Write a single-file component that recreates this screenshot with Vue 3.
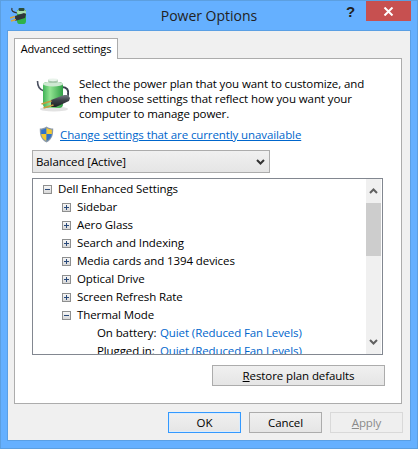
<script setup>
const rows = [
  { label: "Sidebar", box: "plus" },
  { label: "Aero Glass", box: "plus" },
  { label: "Search and Indexing", box: "plus" },
  { label: "Media cards and 1394 devices", box: "plus" },
  { label: "Optical Drive", box: "plus" },
  { label: "Screen Refresh Rate", box: "plus" },
  { label: "Thermal Mode", box: "minus" },
];
const settings = [
  { label: "On battery:", value: "Quiet (Reduced Fan Levels)" },
  { label: "Plugged in:", value: "Quiet (Reduced Fan Levels)" },
];
</script>

<template>
  <div class="window">
    <div class="titlebar">
      <div class="title-left">
        <svg class="app-icon" width="18" height="18" viewBox="0 0 18 18">
          <path d="M7 3h9v11c0 2-1 3-2 3H9c-1 0-2-1-2-3z" fill="#2fb24a" />
          <rect x="7" y="3" width="9" height="4" rx="1.500" fill="#a8dcb0" />
          <rect x="8.500" y="1" width="6" height="3" rx="1" fill="#2c4d3a" />
          <path d="M2 1c-1 3 1 4 5 5" fill="none" stroke="#333" stroke-width="1.200" />
          <path d="M5 9l9-3 2 1-1 4-10 3z" fill="#30353a" />
          <path d="M0 11l5-1.500M1 14l5-1.500" stroke="#d9a53a" stroke-width="1.500" />
        </svg>
      </div>
      <div class="title">Power Options</div>
      <div class="controls">
        <span class="help">?</span>
        <span class="close">
          <svg width="11" height="9" viewBox="0 0 11 9">
            <path d="M1.500 .5l8 8M9.500 .5l-8 8" stroke="#fff" stroke-width="2" fill="none" />
          </svg>
        </span>
      </div>
    </div>

    <div class="client">
      <div class="tabs">
        <div class="tab">Advanced settings</div>
      </div>
      <div class="panel">
        <div class="intro">
          <svg class="battery" width="34" height="36" viewBox="0 0 34 36">
            <defs>
              <linearGradient id="cell" x1="0" x2="1" y1="0" y2="0">
                <stop offset="0" stop-color="#3fb356" />
                <stop offset="0.35" stop-color="#92e392" />
                <stop offset="1" stop-color="#2f9f45" />
              </linearGradient>
              <linearGradient id="plug" x1="0" x2="0" y1="0" y2="1">
                <stop offset="0" stop-color="#777d85" />
                <stop offset="0.45" stop-color="#3b4046" />
                <stop offset="1" stop-color="#1d2024" />
              </linearGradient>
            </defs>
            <ellipse cx="18" cy="31" rx="14" ry="2.500" fill="#e2e2e2" />
            <path d="M1.500 3c0 6 2.500 9 6.500 10" fill="none" stroke="#4a5060" stroke-width="1.600" />
            <path d="M26 9c5 0 7 3 6 8-.5 2-1.500 3.500-3 4" fill="none" stroke="#3c4250" stroke-width="2" />
            <rect x="7" y="4" width="20" height="26" rx="4" fill="url(#cell)" />
            <ellipse cx="17" cy="6" rx="10" ry="2.500" fill="#cfe8d2" />
            <rect x="12" y="1" width="10" height="4" rx="2" fill="#a9c9ae" />
            <ellipse cx="17" cy="1.800" rx="5" ry="1.400" fill="#e8f3ea" />
            <path d="M15 22l13-5h4l2 3-1 3-13 6h-5z" fill="url(#plug)" />
            <path d="M5.500 26l10-3M7.500 30l10-3" stroke="#c99a3f" stroke-width="1.800" fill="none" />
          </svg>
          <p class="intro-text">
            Select the power plan that you want to customize, and<br />
            then choose settings that reflect how you want your<br />
            computer to manage power.
          </p>
        </div>
        <div class="change">
          <svg class="shield" width="15" height="17" viewBox="0 0 15 17">
            <path d="M7.500 .5C5.500 2 3 2.500 .8 2.500c0 6 .4 10.500 6.700 14 6.300-3.500 6.700-8 6.700-14C12 2.500 9.500 2 7.500 .5z" fill="#8a98a8" />
            <path d="M7.500 2C5.800 3 4 3.500 2.200 3.700v4.300h5.300z" fill="#2f72c8" />
            <path d="M7.500 2v6h5.300V3.700C11 3.500 9.200 3 7.500 2z" fill="#f3c92e" />
            <path d="M2.300 8h5.200v7C4 13 2.600 11 2.300 8z" fill="#f3c92e" />
            <path d="M7.500 8h5.200c-.3 3-1.700 5-5.200 7z" fill="#2f72c8" />
          </svg>
          <a class="link" href="#">Change settings that are currently unavailable</a>
        </div>
        <div class="dropdown">
          <span>Balanced [Active]</span>
          <svg width="9" height="6" viewBox="0 0 9 6">
            <path d="M1 1l3.500 3.500L8 1" fill="none" stroke="#333" stroke-width="2" />
          </svg>
        </div>
        <div class="list">
          <div class="tree">
            <div class="row">
              <span class="box"><i class="h"></i></span>
              <span>Dell Enhanced Settings</span>
            </div>
            <div v-for="r in rows" :key="r.label" class="row level1">
              <span class="box">
                <i class="h"></i>
                <i v-if="r.box === 'plus'" class="v"></i>
              </span>
              <span>{{ r.label }}</span>
            </div>
            <div v-for="s in settings" :key="s.label" class="row level2">
              <span class="name">{{ s.label }}</span>
              <span class="value">{{ s.value }}</span>
            </div>
          </div>
          <div class="scrollbar">
            <div class="arrow">
              <svg width="9" height="6" viewBox="0 0 9 6">
                <path d="M1 5l3.500-3.500L8 5" fill="none" stroke="#606060" stroke-width="2" />
              </svg>
            </div>
            <div class="thumb"></div>
            <div class="track"></div>
            <div class="arrow">
              <svg width="9" height="6" viewBox="0 0 9 6">
                <path d="M1 1l3.500 3.500L8 1" fill="none" stroke="#606060" stroke-width="2" />
              </svg>
            </div>
          </div>
        </div>
        <div class="restore-row">
          <button class="btn restore"><u>R</u>estore plan defaults</button>
        </div>
      </div>
      <div class="footer">
        <button class="btn ok">OK</button>
        <button class="btn">Cancel</button>
        <button class="btn disabled"><u>A</u>pply</button>
      </div>
    </div>
  </div>
</template>

<style scoped>
.window {
  width: 418px;
  height: 449px;
  box-sizing: border-box;
  background: #65b0ff;
  border: 1px solid #5c9fe0;
  padding: 0 6px 7px;
  display: flex;
  flex-direction: column;
  font-family: "Open Sans", "Noto Sans", sans-serif;
  font-size: 11.5px;
  letter-spacing: -0.1px;
  color: #000;
  overflow: hidden;
}
.titlebar {
  height: 29px;
  flex: none;
  display: grid;
  grid-template-columns: 1fr auto 1fr;
  margin: 0 -6px;
}
.title-left {
  padding: 6px 0 0 9px;
}
.app-icon {
  display: block;
}
.title {
  font-size: 14px;
  letter-spacing: 0;
  line-height: 29px;
  color: #222;
}
.controls {
  display: flex;
  justify-content: flex-end;
  align-items: flex-start;
  padding-right: 6px;
}
.help {
  font-family: "Liberation Sans", sans-serif;
  font-size: 15px;
  font-weight: 700;
  line-height: 22px;
  margin-right: 11px;
  color: #222;
}
.close {
  width: 45px;
  height: 20px;
  background: #c75050;
  display: flex;
  align-items: center;
  justify-content: center;
}
.client {
  flex: 1;
  background: #f0f0f0;
  border: 1px solid #5a9fe4;
  padding: 7px 8px 0 6px;
  display: flex;
  flex-direction: column;
}
.tabs {
  display: flex;
  height: 20px;
  flex: none;
}
.tab {
  width: 104px;
  height: 21px;
  box-sizing: border-box;
  border: 1px solid #acacac;
  border-bottom: 0;
  background: #fff;
  font-size: 11px;
  line-height: 20px;
  letter-spacing: -0.15px;
  text-align: center;
  position: relative;
  z-index: 1;
}
.panel {
  flex: 1;
  background: #fff;
  border: 1px solid #acacac;
  padding: 17px 18px 0 17px;
  display: flex;
  flex-direction: column;
}
.intro {
  display: flex;
  gap: 9px;
  padding-left: 4px;
  height: 45px;
}
.battery {
  margin-top: 2px;
  flex: none;
}
.intro-text {
  margin: 0;
  line-height: 15px;
  white-space: nowrap;
}
.change {
  display: flex;
  align-items: center;
  gap: 6px;
  margin-top: 5px;
  padding-left: 7px;
  height: 17px;
}
.shield {
  flex: none;
}
.link {
  color: #0066cc;
  text-decoration: underline;
  white-space: nowrap;
}
.dropdown {
  margin-top: 7px;
  width: 238px;
  height: 23px;
  box-sizing: border-box;
  border: 1px solid #acacac;
  background: linear-gradient(#f0f0f0, #e5e5e5);
  display: flex;
  align-items: center;
  justify-content: space-between;
  padding: 0 4px 0 3px;
  flex: none;
}
.list {
  margin-top: 5px;
  height: 177px;
  box-sizing: border-box;
  border: 1px solid #828790;
  background: #fff;
  display: flex;
  overflow: hidden;
  flex: none;
  padding-right: 1px;
}
.tree {
  flex: 1;
  overflow: hidden;
  padding: 1px 0 0 10px;
}
.row {
  height: 18px;
  line-height: 18px;
  display: flex;
  align-items: center;
  white-space: nowrap;
}
.level1 {
  padding-left: 19px;
}
.level2 {
  padding-left: 54px;
}
.name {
  width: 63px;
  flex: none;
}
.box {
  width: 9px;
  height: 9px;
  box-sizing: border-box;
  border: 1px solid #8e8f8f;
  background: linear-gradient(#f6f6f6, #d8d8d8);
  margin-right: 6px;
  position: relative;
  flex: none;
}
.box .h {
  position: absolute;
  left: 1px;
  top: 3px;
  width: 5px;
  height: 1px;
  background: #2a4a7a;
}
.box .v {
  position: absolute;
  left: 3px;
  top: 1px;
  width: 1px;
  height: 5px;
  background: #2a4a7a;
}
.value {
  color: #0066cc;
}
.scrollbar {
  width: 15px;
  flex: none;
  background: #f0f0f0;
  display: flex;
  flex-direction: column;
}
.arrow {
  height: 24px;
  flex: none;
  display: flex;
  align-items: center;
  justify-content: center;
}
.thumb {
  height: 53px;
  flex: none;
  background: #cdcdcd;
}
.track {
  flex: 1;
}
.restore-row {
  margin-top: 10px;
  display: flex;
  justify-content: flex-end;
  margin-right: -2px;
}
.btn {
  width: 73px;
  height: 21px;
  box-sizing: border-box;
  border: 1px solid #acacac;
  background: linear-gradient(#f0f0f0, #e5e5e5);
  font: inherit;
  letter-spacing: inherit;
  color: #000;
  padding: 0;
}
.btn.restore {
  width: 173px;
}
.btn.ok {
  border: 1px solid #3399ff;
  box-shadow: inset 0 0 0 1px #dcecfb;
}
.btn.disabled {
  color: #8a8a8a;
  border-color: #d9d9d9;
  background: #efefef;
}
.footer {
  height: 36px;
  flex: none;
  display: flex;
  justify-content: flex-end;
  align-items: flex-start;
  gap: 8px;
  padding: 8px 7px 0 0;
  margin-right: -8px;
  box-sizing: border-box;
}
</style>
